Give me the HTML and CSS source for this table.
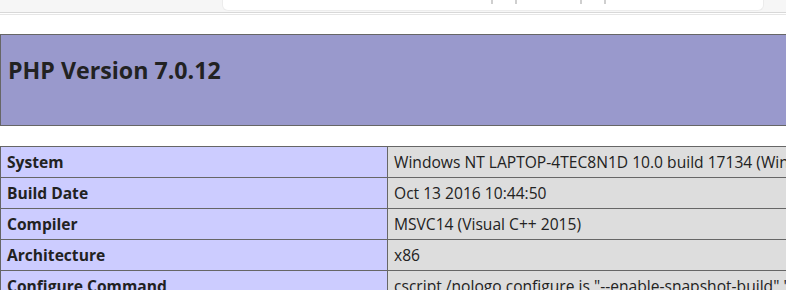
FILE: index.html
```html
<!DOCTYPE html>
<html>
<head>
<meta charset="utf-8">
<link rel="stylesheet" href="styles.css">
</head>
<body>
<div class="topbar"><div class="topbox"><div class="marks"><i></i><i></i><b></b><i></i><i></i></div></div></div>
<div class="page">
  <div class="header"><h1>PHP Version 7.0.12</h1></div>
  <table class="info">
    <tr><td class="e">System</td><td class="v">Windows NT LAPTOP-4TEC8N1D 10.0 build 17134 (Windows 10) i586</td></tr>
    <tr><td class="e">Build Date</td><td class="v">Oct 13 2016 10:44:50</td></tr>
    <tr><td class="e">Compiler</td><td class="v">MSVC14 (Visual C++ 2015)</td></tr>
    <tr><td class="e">Architecture</td><td class="v">x86</td></tr>
    <tr><td class="e">Configure Command</td><td class="v">cscript /nologo configure.js "--enable-snapshot-build" "--enable-debug-pack"</td></tr>
  </table>
</div>
</body>
</html>
```
FILE: styles.css
```css
html, body { margin: 0; padding: 0; background: #fff; overflow: hidden; }
body { width: 786px; font-family: "Open Sans", "Noto Sans", sans-serif; color: #222; }
.topbar {
  height: 12px;
  background: #f6f6f6;
  border-bottom: 1px solid #d8d8d8;
  box-shadow: 0 1px 0 #fff, 0 2px 0 #e6e6e6;
}
.topbox {
  margin-left: 222px;
  width: 540px;
  height: 10px;
  background: #fff;
  border: 1px solid #ececec;
  border-top: none;
  border-radius: 0 0 6px 6px;
}
.marks { display: flex; gap: 22px; padding-left: 268px; align-items: flex-start; }
.marks i { display: block; width: 2px; height: 4px; background: #cfcfcf; }
.marks b { display: block; width: 19px; }
.page { padding-top: 21px; width: 1000px; }
.header {
  height: 90px;
  background: #9999cc;
  border: 1px solid #666;
  border-right: none;
  box-sizing: content-box;
}
.header h1 { margin: 0; padding: 19px 0 0 7px; font-size: 23.2px; font-weight: 700; color: #222; }
.info { margin-top: 20px; border-collapse: collapse; font-size: 15.6px; white-space: nowrap; }
.info td { border: 1px solid #666; height: 31px; padding: 0 6px; box-sizing: border-box; }
.e { background: #ccccff; font-weight: 700; width: 387px; }
.v { background: #dddddd; padding-left: 7px; }
```
